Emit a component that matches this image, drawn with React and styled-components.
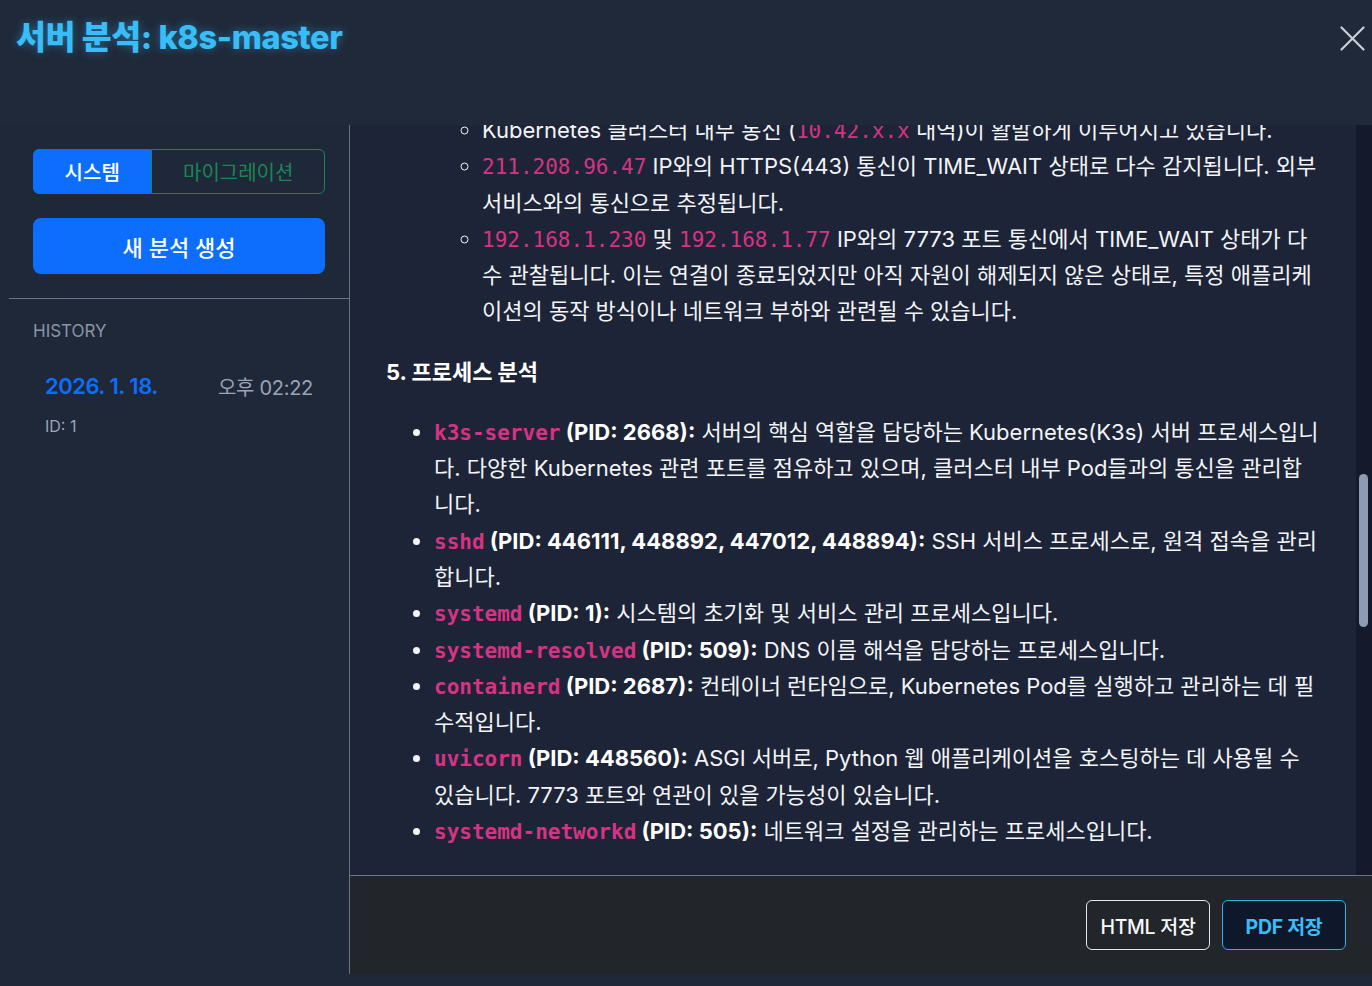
import React from "react";
import styled, { createGlobalStyle } from "styled-components";

const Global = createGlobalStyle`
  html, body { margin: 0; padding: 0; background: #1f2838; }
  body { font-family: "Inter", "Noto Sans CJK KR", sans-serif; color: #f1f3f5; }
  * { box-sizing: border-box; }
`;

const Page = styled.div`
  height: 100vh;
  display: flex;
  flex-direction: column;
  padding-bottom: 12px;
  background: #1f2838;
`;

const Header = styled.header`
  height: 125px;
  flex: none;
  display: flex;
  justify-content: space-between;
  align-items: flex-start;
  padding: 18px 7px 0 16px;
  background: #1f2939;
`;

const Title = styled.h1`
  margin: 0;
  font-size: 32.5px;
  line-height: 40px;
  font-weight: 800;
  letter-spacing: -0.4px;
  color: #38bdf8;
  text-shadow: 0 0 10px rgba(56, 189, 248, 0.45);
`;

const CloseButton = styled.button`
  margin-top: 8px;
  padding: 0;
  border: 0;
  background: none;
  width: 26px;
  height: 24px;
  display: flex;
  align-items: center;
  justify-content: center;
  color: #c9ced6;
`;

const Body = styled.div`
  flex: 1;
  min-height: 0;
  display: flex;
`;

const Sidebar = styled.aside`
  width: 350px;
  flex: none;
  padding-left: 9px;
  border-right: 1px solid #6b7280;
  display: flex;
  flex-direction: column;
`;

const SideSection = styled.div`
  padding: 24px;
  border-bottom: ${(p) => (p.$divider ? "1px solid #6b7280" : "none")};
  display: flex;
  flex-direction: column;
`;

const Toggle = styled.div`
  display: flex;
  height: 45px;
`;

const ToggleButton = styled.button`
  flex: 1 1 auto;
  font-family: inherit;
  font-size: 20px;
  font-weight: ${(p) => (p.$active ? 500 : 400)};
  border: 1px solid ${(p) => (p.$active ? "#0d6efd" : "#198754")};
  background: ${(p) => (p.$active ? "#0d6efd" : "transparent")};
  color: ${(p) => (p.$active ? "#ffffff" : "#198754")};
  border-radius: ${(p) => (p.$first ? "6px 0 0 6px" : "0 6px 6px 0")};
  padding: 0 12px;
`;

const PrimaryButton = styled.button`
  margin-top: 24px;
  height: 56px;
  border: 0;
  border-radius: 8px;
  background: #0d6efd;
  color: #fff;
  font-family: inherit;
  font-size: 22px;
  font-weight: 500;
`;

const SectionLabel = styled.div`
  font-size: 17px;
  line-height: 16px;
  color: #8b95a7;
`;

const HistoryItem = styled.div`
  margin-top: 23px;
  padding: 12px;
  display: flex;
  flex-direction: column;
  gap: 18px;
`;

const HistoryRow = styled.div`
  display: flex;
  justify-content: space-between;
  align-items: center;
  height: 24px;
`;

const HistoryDate = styled.span`
  font-size: 22px;
  font-weight: 600;
  color: #0d6efd;
  letter-spacing: -0.5px;
`;

const HistoryTime = styled.span`
  font-size: 20px;
  color: #9aa4b5;
  letter-spacing: -0.3px;
`;

const HistoryId = styled.span`
  font-size: 16px;
  line-height: 20px;
  color: #9aa4b5;
`;

const Main = styled.main`
  flex: 1;
  min-width: 0;
  display: flex;
  flex-direction: column;
`;

const ScrollArea = styled.div`
  flex: 1;
  min-height: 0;
  display: flex;
  background: #1d2437;
  overflow: hidden;
`;

const Content = styled.div`
  flex: 1;
  min-width: 0;
  padding: 0 36px;
  font-size: 22px;
  line-height: 36.3px;
  color: #f3f4f6;
`;

const Scrolled = styled.div`
  margin-top: -13px;
`;

const List = styled.ul`
  margin: 0;
  padding-left: ${(p) => p.$indent}px;
  list-style: ${(p) => p.$marker};
`;

const Item = styled.li``;

const SectionTitle = styled.h3`
  margin: 24px 0;
  font-size: 22px;
  line-height: 36px;
  font-weight: 700;
  color: #ffffff;
`;

const Code = styled.code`
  font-family: "DejaVu Sans Mono", "Liberation Mono", monospace;
  font-size: 21px;
  line-height: 1;
  color: #d63384;
  font-weight: ${(p) => (p.$bold ? 700 : 400)};
`;

const Strong = styled.strong`
  font-weight: 700;
  color: #fff;
`;

const Track = styled.div`
  width: 16px;
  flex: none;
  background: #141a2b;
  padding: 349px 4px 0 3px;
`;

const Thumb = styled.div`
  height: 153px;
  border-radius: 5px;
  background: #8f9bb3;
`;

const Footer = styled.footer`
  height: 99px;
  flex: none;
  border-top: 1px solid #6b7280;
  background: #222529;
  display: flex;
  justify-content: flex-end;
  align-items: center;
  gap: 12px;
  padding-right: 26px;
`;

const FooterButton = styled.button`
  width: 124px;
  height: 50px;
  border-radius: 6px;
  font-family: inherit;
  font-size: 19.5px;
  letter-spacing: -0.3px;
  border: 1px solid ${(p) => (p.$accent ? "#2fb0ec" : "#e5e7eb")};
  background: ${(p) => (p.$accent ? "#0f172a" : "transparent")};
  color: ${(p) => (p.$accent ? "#38bdf8" : "#f8f9fa")};
  font-weight: ${(p) => (p.$accent ? 700 : 500)};
`;

const processes = [
  {
    name: "k3s-server",
    pid: "2668",
    desc: "서버의 핵심 역할을 담당하는 Kubernetes(K3s) 서버 프로세스입니다. 다양한 Kubernetes 관련 포트를 점유하고 있으며, 클러스터 내부 Pod들과의 통신을 관리합니다.",
  },
  {
    name: "sshd",
    pid: "446111, 448892, 447012, 448894",
    desc: "SSH 서비스 프로세스로, 원격 접속을 관리합니다.",
  },
  { name: "systemd", pid: "1", desc: "시스템의 초기화 및 서비스 관리 프로세스입니다." },
  { name: "systemd-resolved", pid: "509", desc: "DNS 이름 해석을 담당하는 프로세스입니다." },
  {
    name: "containerd",
    pid: "2687",
    desc: "컨테이너 런타임으로, Kubernetes Pod를 실행하고 관리하는 데 필수적입니다.",
  },
  {
    name: "uvicorn",
    pid: "448560",
    desc: "ASGI 서버로, Python 웹 애플리케이션을 호스팅하는 데 사용될 수 있습니다. 7773 포트와 연관이 있을 가능성이 있습니다.",
  },
  { name: "systemd-networkd", pid: "505", desc: "네트워크 설정을 관리하는 프로세스입니다." },
];

export default function App() {
  return (
    <Page>
      <Global />
      <Header>
        <Title>서버 분석: k8s-master</Title>
        <CloseButton aria-label="닫기">
          <svg width="25" height="25" viewBox="0 0 25 25" fill="none" stroke="currentColor" strokeWidth="2.2" strokeLinecap="round">
            <path d="M1.5 1.5 L23.5 23.5 M23.5 1.5 L1.5 23.5" />
          </svg>
        </CloseButton>
      </Header>
      <Body>
        <Sidebar>
          <SideSection $divider>
            <Toggle>
              <ToggleButton $active $first>시스템</ToggleButton>
              <ToggleButton>마이그레이션</ToggleButton>
            </Toggle>
            <PrimaryButton>새 분석 생성</PrimaryButton>
          </SideSection>
          <SideSection>
            <SectionLabel>HISTORY</SectionLabel>
            <HistoryItem>
              <HistoryRow>
                <HistoryDate>2026. 1. 18.</HistoryDate>
                <HistoryTime>오후 02:22</HistoryTime>
              </HistoryRow>
              <HistoryId>ID: 1</HistoryId>
            </HistoryItem>
          </SideSection>
        </Sidebar>
        <Main>
          <ScrollArea>
            <Content>
              <Scrolled>
                <List $indent={96} $marker="circle">
                  <Item>
                    Kubernetes 클러스터 내부 통신 (<Code>10.42.x.x</Code> 내역)이 활발하게 이루어지고 있습니다.
                  </Item>
                  <Item>
                    <Code>211.208.96.47</Code> IP와의 HTTPS(443) 통신이 TIME_WAIT 상태로 다수 감지됩니다. 외부 서비스와의 통신으로 추정됩니다.
                  </Item>
                  <Item>
                    <Code>192.168.1.230</Code> 및 <Code>192.168.1.77</Code> IP와의 7773 포트 통신에서 TIME_WAIT 상태가 다수 관찰됩니다. 이는 연결이 종료되었지만 아직 자원이 해제되지 않은 상태로, 특정 애플리케이션의 동작 방식이나 네트워크 부하와 관련될 수 있습니다.
                  </Item>
                </List>
                <SectionTitle>5. 프로세스 분석</SectionTitle>
                <List $indent={48} $marker="disc">
                  {processes.map((p) => (
                    <Item key={p.name}>
                      <Strong>
                        <Code $bold>{p.name}</Code> (PID: {p.pid}):
                      </Strong>{" "}
                      {p.desc}
                    </Item>
                  ))}
                </List>
              </Scrolled>
            </Content>
            <Track>
              <Thumb />
            </Track>
          </ScrollArea>
          <Footer>
            <FooterButton>HTML 저장</FooterButton>
            <FooterButton $accent>PDF 저장</FooterButton>
          </Footer>
        </Main>
      </Body>
    </Page>
  );
}
